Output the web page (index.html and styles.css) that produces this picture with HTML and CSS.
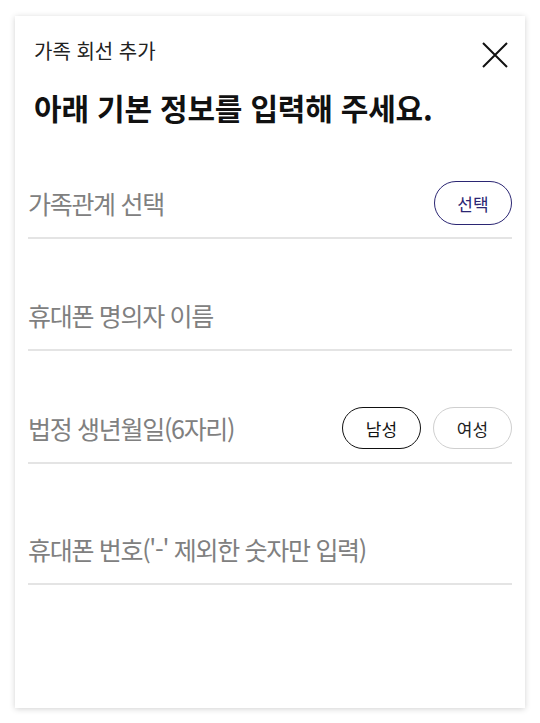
FILE: index.html
```html
<!DOCTYPE html>
<html lang="ko">
<head>
    <meta charset="UTF-8">
    <meta name="viewport" content="width=device-width, initial-scale=1.0">
    <title>가족 회선 추가</title>
    <link rel="stylesheet" href="styles.css">
</head>
<body>
    <div class="sheet">
        <div class="sheet-head">
            <span class="sheet-title">가족 회선 추가</span>
            <button class="close-btn" aria-label="닫기">
                <svg width="26" height="26" viewBox="0 0 26 26">
                    <path d="M1 1 L25 25 M25 1 L1 25" stroke="#111" stroke-width="2" fill="none"/>
                </svg>
            </button>
        </div>
        <h2 class="sheet-heading">아래 기본 정보를 입력해 주세요.</h2>

        <div class="field field-first">
            <input type="text" placeholder="가족관계 선택" readonly>
            <button class="pill pill-navy">선택</button>
        </div>

        <div class="field field-name">
            <input type="text" placeholder="휴대폰 명의자 이름">
        </div>

        <div class="field">
            <input type="text" placeholder="법정 생년월일(6자리)">
            <div class="pill-group">
                <button class="pill pill-dark">남성</button>
                <button class="pill pill-light">여성</button>
            </div>
        </div>

        <div class="field field-last">
            <input type="tel" placeholder="휴대폰 번호('-' 제외한 숫자만 입력)">
        </div>
    </div>
</body>
</html>
```

FILE: styles.css
```css
body { margin: 0; background: #fff; font-family: "Noto Sans CJK KR", "Noto Sans", sans-serif; color: #111; }
.sheet {
    margin: 16px 15px;
    height: 692px;
    padding: 24px 13px 0;
    box-sizing: border-box;
    background: #fff;
    box-shadow: 0 1px 6px rgba(0, 0, 0, 0.18);
}
.sheet-head { display: flex; justify-content: space-between; align-items: flex-start; padding-left: 6px; }
.sheet-title { font-size: 20px; line-height: 22px; color: #222; }
.close-btn { border: none; background: none; padding: 0; margin: 2px 4px 0 0; cursor: pointer; line-height: 0; }
.sheet-heading { margin: 20px 0 0 6px; font-size: 30px; line-height: 38px; font-weight: bold; letter-spacing: -0.2px; }

/* 입력 행: 밑줄 하나씩 */
.field {
    display: flex;
    align-items: center;
    height: 44px;
    margin-top: 55px;
    padding-bottom: 12px;
    border-bottom: 2px solid #e4e4e4;
}
.field-first { margin-top: 55px; }
.field-name { margin-top: 54px; }
.field-last { margin-top: 63px; }
.field input {
    flex: 1;
    min-width: 0;
    border: none;
    outline: none;
    padding: 0;
    font-family: inherit;
    font-size: 25px;
    letter-spacing: -1.3px;
    color: #333;
    background: transparent;
}
.field input::placeholder { color: #808080; }

.pill-group { display: flex; gap: 12px; }
.pill {
    width: 78px;
    height: 44px;
    border-radius: 22px;
    background: #fff;
    font-family: inherit;
    font-size: 17px;
    cursor: pointer;
}
.pill-navy { border: 1px solid #2b2673; color: #2b2673; }
.pill-dark { border: 1px solid #111; color: #111; width: 79px; height: 42px; }
.pill-light { border: 1px solid #cfcfcf; color: #222; width: 79px; height: 42px; }
```
